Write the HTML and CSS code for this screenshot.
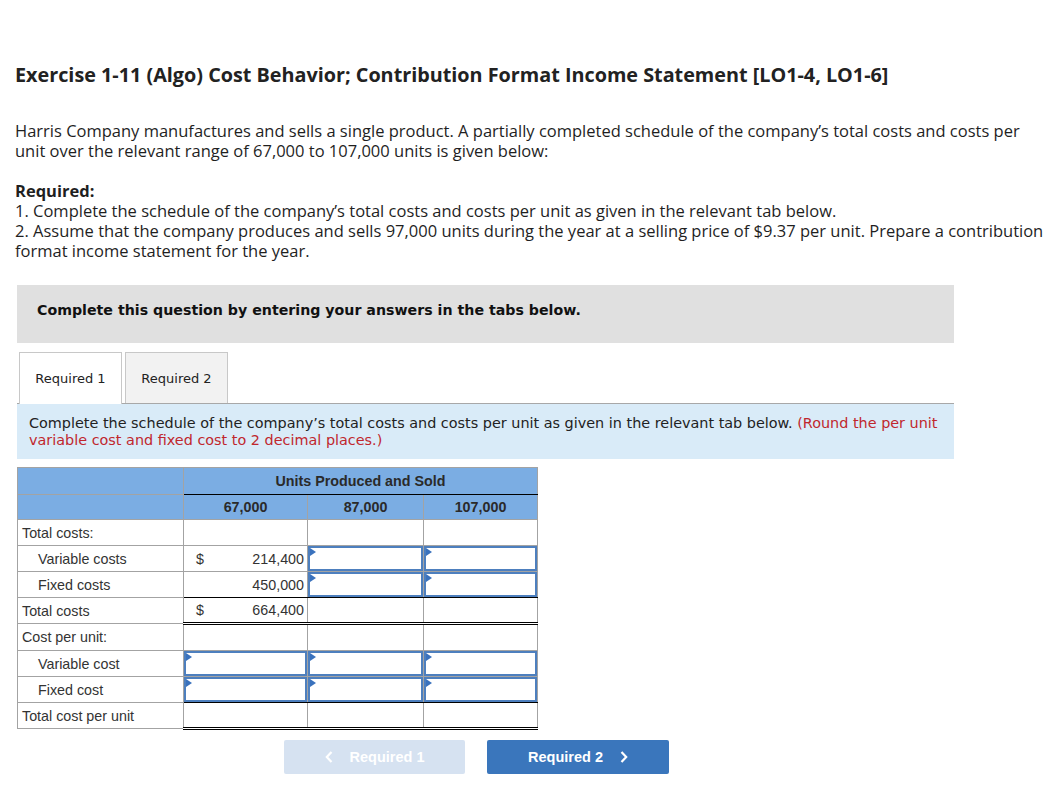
FILE: index.html
```html
<!DOCTYPE html>
<html>
<head>
<meta charset="utf-8">
<link rel="stylesheet" href="styles.css">
</head>
<body>
<div class="page">
  <h1 class="title">Exercise 1-11 (Algo) Cost Behavior; Contribution Format Income Statement [LO1-4, LO1-6]</h1>
  <p class="intro">Harris Company manufactures and sells a single product. A partially completed schedule of the company’s total costs and costs per unit over the relevant range of 67,000 to 107,000 units is given below:</p>
  <div class="req">
    <div class="req-head">Required:</div>
    <div>1. Complete the schedule of the company’s total costs and costs per unit as given in the relevant tab below.</div>
    <div>2. Assume that the company produces and sells 97,000 units during the year at a selling price of $9.37 per unit. Prepare a contribution format income statement for the year.</div>
  </div>

  <div class="question">
    <div class="prompt">Complete this question by entering your answers in the tabs below.</div>
    <div class="tabs">
      <div class="tab active">Required 1</div>
      <div class="tab">Required 2</div>
    </div>
    <div class="instr">Complete the schedule of the company’s total costs and costs per unit as given in the relevant tab below. <span class="red">(Round the per unit variable cost and fixed cost to 2 decimal places.)</span></div>

    <table class="sched">
      <colgroup>
        <col class="c0"><col class="c1"><col class="c2"><col class="c3">
      </colgroup>
      <tr class="h1">
        <th></th>
        <th colspan="3" class="blk">Units Produced and Sold</th>
      </tr>
      <tr class="h2">
        <th></th>
        <th>67,000</th>
        <th>87,000</th>
        <th>107,000</th>
      </tr>
      <tr>
        <td class="lbl">Total costs:</td>
        <td></td><td></td><td></td>
      </tr>
      <tr>
        <td class="lbl ind">Variable costs</td>
        <td><div class="num"><span>$</span><span>214,400</span></div></td>
        <td class="inp"><div class="box"></div></td>
        <td class="inp"><div class="box"></div></td>
      </tr>
      <tr class="single">
        <td class="lbl ind">Fixed costs</td>
        <td><div class="num"><span></span><span>450,000</span></div></td>
        <td class="inp"><div class="box"></div></td>
        <td class="inp"><div class="box"></div></td>
      </tr>
      <tr class="double">
        <td class="lbl">Total costs</td>
        <td><div class="num"><span>$</span><span>664,400</span></div></td>
        <td></td><td></td>
      </tr>
      <tr>
        <td class="lbl">Cost per unit:</td>
        <td></td><td></td><td></td>
      </tr>
      <tr>
        <td class="lbl ind">Variable cost</td>
        <td class="inp"><div class="box"></div></td>
        <td class="inp"><div class="box"></div></td>
        <td class="inp"><div class="box"></div></td>
      </tr>
      <tr class="single">
        <td class="lbl ind">Fixed cost</td>
        <td class="inp"><div class="box"></div></td>
        <td class="inp"><div class="box"></div></td>
        <td class="inp"><div class="box"></div></td>
      </tr>
      <tr class="double">
        <td class="lbl">Total cost per unit</td>
        <td></td><td></td><td></td>
      </tr>
    </table>

    <div class="nav">
      <div class="btn prev"><svg class="chev" width="8" height="12" viewBox="0 0 8 12"><path d="M6.5 1 L1.8 6 L6.5 11" fill="none" stroke="#fff" stroke-width="2.2"/></svg><span>Required 1</span></div>
      <div class="btn next"><span>Required 2</span><svg class="chev" width="8" height="12" viewBox="0 0 8 12"><path d="M1.5 1 L6.2 6 L1.5 11" fill="none" stroke="#fff" stroke-width="2.2"/></svg></div>
    </div>
  </div>
</div>
</body>
</html>
```
FILE: styles.css
```css
html, body {
  margin: 0;
  padding: 0;
  background: #fff;
}
.page {
  padding: 63px 0 0 15px;
  font-family: "Open Sans", "Liberation Sans", sans-serif;
  color: #1f1f1f;
}
.title {
  margin: 0;
  font-size: 19.8px;
  line-height: 24px;
  font-weight: 700;
  color: #222;
}
.intro {
  margin: 34px 0 0 0;
  font-size: 16.5px;
  line-height: 20px;
  width: 1012px;
}
.req {
  margin-top: 20px;
  font-size: 16.5px;
  line-height: 20px;
  width: 1045px;
}
.req-head {
  font-weight: 700;
}
.question {
  margin: 24px 0 0 2px;
  width: 937px;
  font-family: "DejaVu Sans", Verdana, sans-serif;
}
.prompt {
  background: #e0e0e0;
  height: 58px;
  box-sizing: border-box;
  padding: 0 20px 8px 20px;
  display: flex;
  align-items: center;
  font-size: 14.2px;
  font-weight: 700;
  color: #111;
}
.tabs {
  display: flex;
  gap: 3px;
  margin: 9px 0 0 2px;
}
.tab {
  width: 103px;
  height: 51px;
  box-sizing: border-box;
  border: 1px solid #c8c8c8;
  border-bottom: none;
  background: #f2f2f2;
  display: flex;
  align-items: center;
  justify-content: center;
  font-size: 13px;
  color: #222;
}
.tab.active {
  background: #fff;
  height: 52px;
  margin-bottom: -1px;
  position: relative;
  z-index: 1;
}
.instr {
  background: #d9ebf8;
  border-top: 1px solid #a8a8a8;
  padding: 11px 12px 10px 12px;
  font-size: 14.4px;
  line-height: 17px;
  color: #222;
}
.red {
  color: #c0272d;
}
.sched {
  margin-top: 8px;
  border-collapse: collapse;
  font-family: "Liberation Sans", Arial, sans-serif;
  font-size: 14.3px;
  color: #333;
}
.c0 { width: 166px; }
.c1 { width: 124px; }
.c2 { width: 116px; }
.c3 { width: 114px; }
.sched th, .sched td {
  border: 1px solid #a3a3a3;
  padding: 0;
}
.sched th {
  background: #7badE3;
  font-weight: 700;
  color: #2a2a2a;
}
.h1 th { height: 26px; }
.h2 th { height: 24px; }
.h1 th.blk { border-bottom: 1px solid #000; }
.sched td { height: 25px; }
.sched tr.double td { height: 24px; }
.lbl {
  padding-left: 4px !important;
  color: #333;
  white-space: nowrap;
}
.ind {
  padding-left: 20px !important;
}
.num {
  display: flex;
  justify-content: space-between;
  padding: 0 3px 0 12px;
}
.single td + td { border-bottom: 1px solid #000; }
.double td + td { border-bottom: 3px double #000; }
.inp {
  padding: 0 !important;
}
.box {
  height: 21px;
  border: 2px solid #4d7fbe;
  background: #fff;
  position: relative;
}
.box::before {
  content: "";
  position: absolute;
  left: 0;
  top: 0;
  border-left: 6px solid #3a72bd;
  border-top: 4px solid transparent;
  border-bottom: 4px solid transparent;
}
.nav {
  display: flex;
  gap: 22px;
  margin: 10px 0 0 267px;
}
.btn {
  width: 181px;
  height: 34px;
  border-radius: 2px;
  display: flex;
  align-items: center;
  justify-content: center;
  gap: 17px;
  color: #fff;
  font-family: "Liberation Sans", Arial, sans-serif;
  font-weight: 700;
  font-size: 14.5px;
}
.btn.prev {
  background: #d6e2f1;
}
.btn.next {
  width: 182px;
  background: #3a76bc;
}
.chev {
  display: block;
}
```
